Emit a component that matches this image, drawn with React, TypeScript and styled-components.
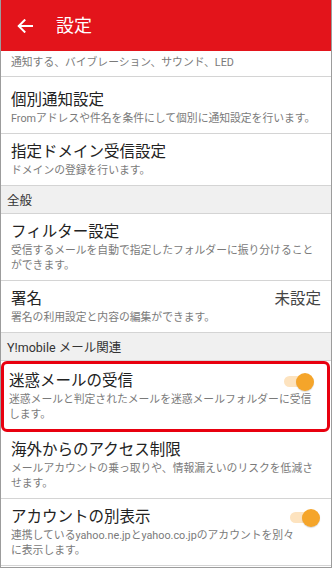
import { ReactNode } from "react";
import { createGlobalStyle, styled } from "styled-components";

const GlobalStyle = createGlobalStyle`
  html, body {
    margin: 0;
    padding: 0;
    background: #ffffff;
  }
  * {
    box-sizing: border-box;
  }
`;

type Item = {
  title: string;
  sub: ReactNode;
  value?: string;
  toggle?: boolean;
  boxed?: boolean;
};

const App = () => {
  return (
    <>
      <GlobalStyle />
      <Screen>
        <Header>
          <BackButton aria-label="戻る">
            <svg width="16" height="14" viewBox="0 0 16 14" fill="none">
              <path d="M15 7H2M7.5 1.2L1.7 7l5.8 5.8" stroke="#fff" strokeWidth="2" strokeLinecap="square" />
            </svg>
          </BackButton>
          <HeaderTitle>設定</HeaderTitle>
        </Header>
        <List>
          <CutRow>
            <Sub>通知する、バイブレーション、サウンド、LED</Sub>
          </CutRow>
          <Row $top={13}>
            <Title>個別通知設定</Title>
            <Sub>Fromアドレスや件名を条件にして個別に通知設定を行います。</Sub>
          </Row>
          <Row>
            <Title>指定ドメイン受信設定</Title>
            <Sub>ドメインの登録を行います。</Sub>
          </Row>
          <Section>全般</Section>
          {general.map((item) => (
            <Entry key={item.title} item={item} />
          ))}
          <Section>Y!mobile メール関連</Section>
          {ymobile.map((item) => (
            <Entry key={item.title} item={item} />
          ))}
        </List>
      </Screen>
    </>
  );
};

const Entry = ({ item }: { item: Item }) => {
  const Wrap = item.boxed ? BoxedRow : Row;
  return (
    <Wrap>
      <TitleLine>
        <Title>{item.title}</Title>
        {item.value && <Value>{item.value}</Value>}
        {item.toggle && (
          <Switch>
            <Track />
            <Thumb />
          </Switch>
        )}
      </TitleLine>
      <Sub>{item.sub}</Sub>
    </Wrap>
  );
};

const general: Item[] = [
  { title: "フィルター設定", sub: "受信するメールを自動で指定したフォルダーに振り分けることができます。" },
  { title: "署名", sub: "署名の利用設定と内容の編集ができます。", value: "未設定" },
];

const ymobile: Item[] = [
  {
    title: "迷惑メールの受信",
    sub: "迷惑メールと判定されたメールを迷惑メールフォルダーに受信します。",
    toggle: true,
    boxed: true,
  },
  { title: "海外からのアクセス制限", sub: "メールアカウントの乗っ取りや、情報漏えいのリスクを低減させます。" },
  {
    title: "アカウントの別表示",
    sub: (
      <>
        連携しているyahoo.ne.jpとyahoo.co.jpのアカウントを別々
        <br />
        に表示します。
      </>
    ),
    toggle: true,
  },
];

export default App;

const Screen = styled.div`
  width: 332px;
  height: 568px;
  overflow: hidden;
  display: flex;
  flex-direction: column;
  border: 1px solid #9c9c9c;
  border-top: none;
  font-family: Roboto, "Noto Sans CJK JP", sans-serif;
  background: #ffffff;
`;

const Header = styled.div`
  height: 51px;
  flex-shrink: 0;
  background: #e3141b;
  display: flex;
  align-items: center;
  padding-left: 17px;
  margin: 0 -1px;
`;

const BackButton = styled.div`
  width: 16px;
  height: 14px;
  display: flex;
  margin-top: 1px;
`;

const HeaderTitle = styled.div`
  margin-left: 23px;
  color: #ffffff;
  font-size: 18px;
  line-height: 24px;
`;

const List = styled.div`
  display: flex;
  flex-direction: column;
`;

const CutRow = styled.div`
  padding: 4px 10px 6px;
  border-bottom: 1px solid #d4d4d4;
`;

const Row = styled.div<{ $top?: number }>`
  padding: ${(p) => p.$top ?? 8}px 10px 7px 10px;
  border-bottom: 1px solid #d4d4d4;
`;

const BoxedRow = styled.div`
  margin: 0 1px 0 0;
  padding: 7px 12px 7px 5px;
  border: 3px solid #e8000f;
  border-radius: 6px;
`;

const TitleLine = styled.div`
  display: flex;
  align-items: center;
  justify-content: space-between;
`;

const Title = styled.div`
  font-size: 15.5px;
  line-height: 21px;
  color: #222222;
`;

const Value = styled.div`
  font-size: 15.5px;
  line-height: 21px;
  color: #444444;
`;

const Sub = styled.div`
  font-size: 10.8px;
  line-height: 15px;
  color: #7a7a7a;
`;

const Section = styled.div`
  height: 28px;
  flex-shrink: 0;
  display: flex;
  align-items: center;
  padding-left: 6px;
  background: #f0f0f0;
  border-bottom: 1px solid #d4d4d4;
  font-size: 12.5px;
  color: #333333;
`;

const Switch = styled.div`
  position: relative;
  width: 30px;
  height: 18px;
  margin-right: 1px;
  display: flex;
  align-items: center;
`;

const Track = styled.div`
  width: 26px;
  height: 11px;
  border-radius: 6px;
  background: #fde3bf;
`;

const Thumb = styled.div`
  position: absolute;
  right: 0;
  top: 0;
  width: 18px;
  height: 18px;
  border-radius: 50%;
  background: #f5a52a;
  box-shadow: 0 1px 1px rgba(0, 0, 0, 0.15);
`;
